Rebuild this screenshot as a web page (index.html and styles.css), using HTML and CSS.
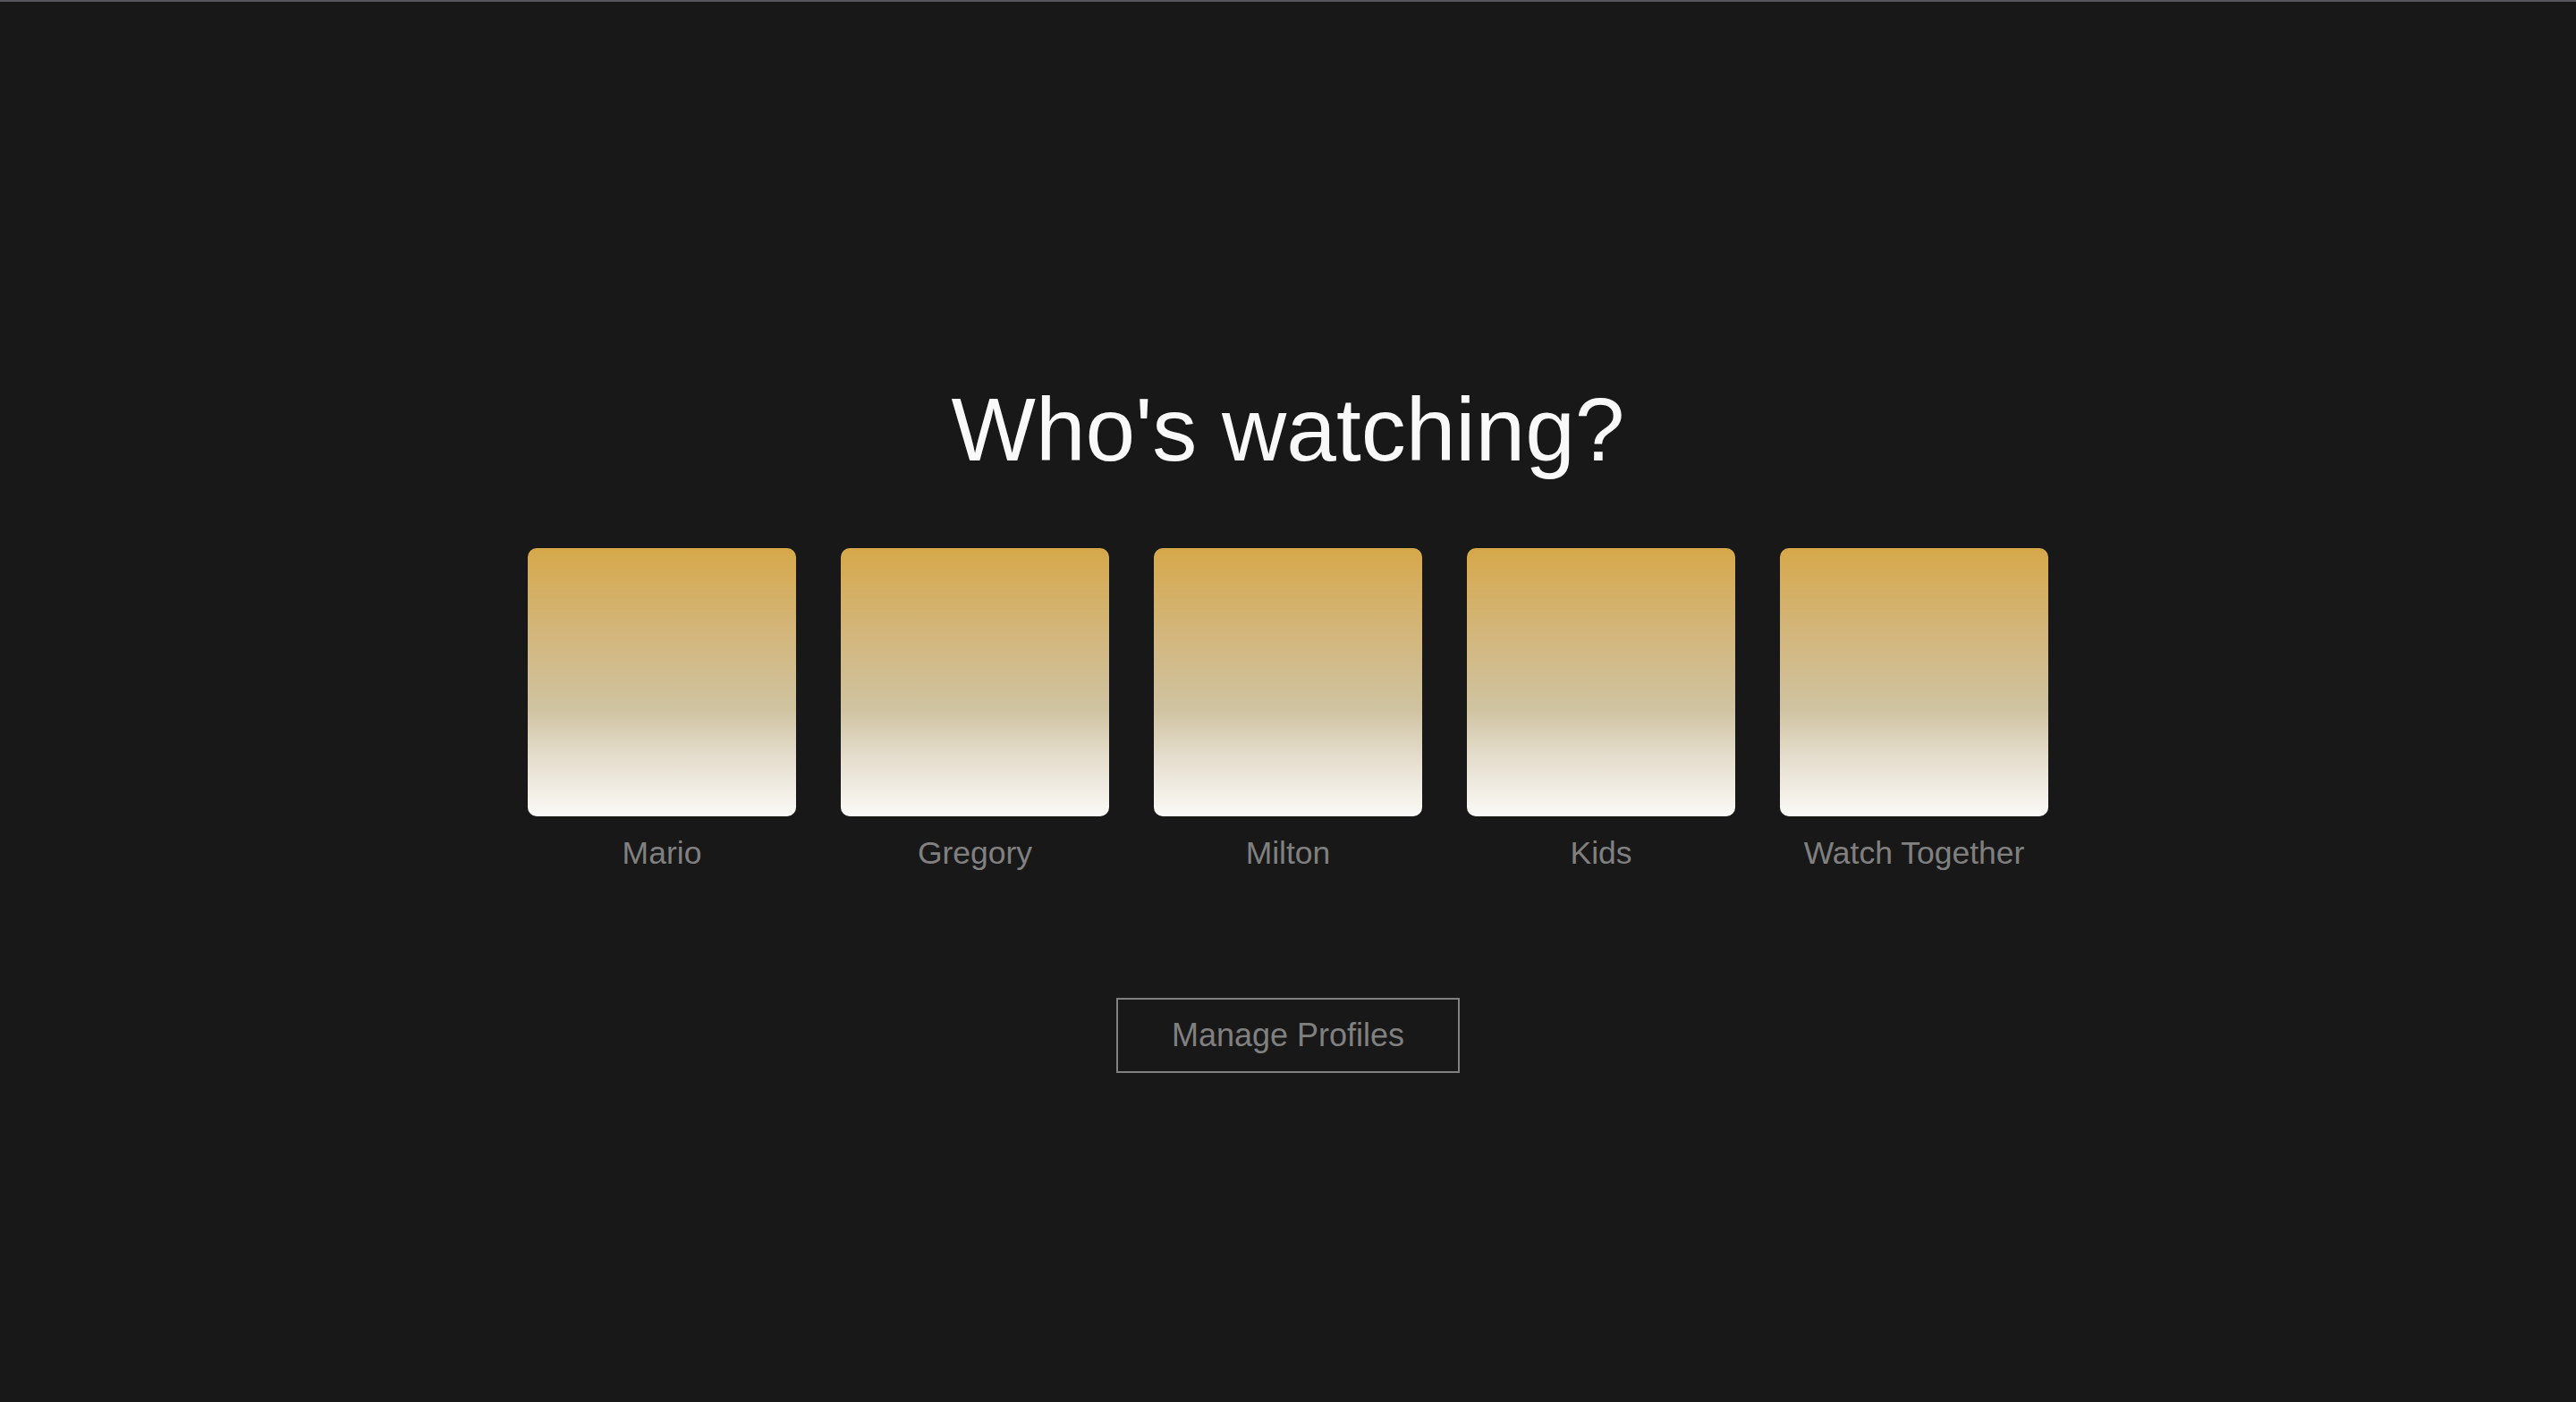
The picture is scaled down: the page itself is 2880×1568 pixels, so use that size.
FILE: index.html
```html
<!DOCTYPE html>
<html lang="en">
<head>
<meta charset="utf-8">
<title>Who's watching?</title>
<link rel="stylesheet" href="styles.css">
</head>
<body>
<main class="profiles">
  <h1 class="title">Who's watching?</h1>
  <ul class="profile-list">
    <li class="profile"><div class="avatar"></div><span class="name">Mario</span></li>
    <li class="profile"><div class="avatar"></div><span class="name">Gregory</span></li>
    <li class="profile"><div class="avatar"></div><span class="name">Milton</span></li>
    <li class="profile"><div class="avatar"></div><span class="name">Kids</span></li>
    <li class="profile"><div class="avatar"></div><span class="name">Watch Together</span></li>
  </ul>
  <button class="manage">Manage Profiles</button>
</main>
</body>
</html>
```
FILE: styles.css
```css
html, body {
  margin: 0;
  padding: 0;
  background: #181818;
}
body {
  border-top: 2px solid #57565c;
  min-height: 1566px;
  box-sizing: border-box;
  font-family: "Liberation Sans", Arial, sans-serif;
}
.profiles {
  display: flex;
  flex-direction: column;
  align-items: center;
  padding-top: 420px;
}
.title {
  margin: 0;
  font-size: 100px;
  font-weight: 400;
  line-height: 116px;
  color: #f9f9f9;
}
.profile-list {
  list-style: none;
  margin: 75px 0 0;
  padding: 0;
  display: flex;
  gap: 50px;
}
.profile {
  width: 300px;
  display: flex;
  flex-direction: column;
  align-items: center;
}
.avatar {
  width: 300px;
  height: 300px;
  border-radius: 10px;
  background: linear-gradient(to bottom, #d6a84a 0%, #d3b579 30%, #cfc3a1 60%, #e4dccb 77%, #fbfaf7 100%);
}
.name {
  margin-top: 21px;
  font-size: 35.5px;
  line-height: 40px;
  color: #808080;
  white-space: nowrap;
}
.manage {
  margin-top: 142px;
  padding: 0 60px;
  height: 84px;
  background: transparent;
  border: 2px solid #808080;
  color: #808080;
  font-family: "Liberation Sans", Arial, sans-serif;
  font-size: 36px;
  letter-spacing: 0;
}
```
